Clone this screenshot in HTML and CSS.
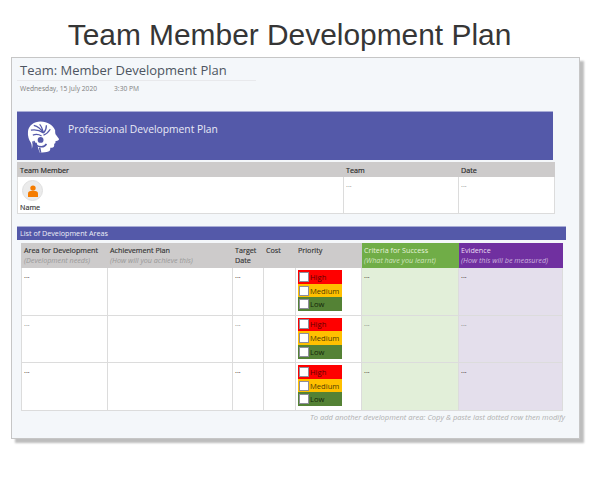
FILE: index.html
```html
<!DOCTYPE html>
<html lang="en">
<head>
<meta charset="utf-8">
<title>Team Member Development Plan</title>
<link rel="stylesheet" href="styles.css">
</head>
<body>
<h1 class="slide-title">Team Member Development Plan</h1>
<main class="panel">
  <header class="page-head">
    <div class="page-title">Team: Member Development Plan</div>
    <div class="page-date"><span>Wednesday, 15 July 2020</span><span>3:30 PM</span></div>
  </header>
  <section class="banner">
    <svg class="banner-icon" viewBox="0 0 34 34" aria-hidden="true">
      <path fill="#fff" d="M14 1C7 1 2 5 1 11c-.5 5 1 9 3 12 1 2 1 4 1 6 1-3 1-5 0-8 2 2 3 2 5 2 1 4 2 7 3 10 4 0 7 0 9-1 2-1 2-2 2-4 2 0 4 0 4-2l0-2c1 0 2-1 1-2l1-1c2 0 3-1 3-2l-3-4c-1-1-1-3-1-5C27 5 21 1 14 1z"/>
      <path fill="none" stroke="#5459a9" stroke-width="1.3" d="M4 10c5-1 9 0 13 3M7 5c4 1 7 3 10 8M13 4c2 2 3 5 4 9M20 5c0 3-1 6-3 8M24 9c-2 3-4 5-7 6M6 15c3-1 6-1 9 1"/>
      <circle cx="14" cy="20" r="3" fill="#5459a9"/>
      <path fill="none" stroke="#5459a9" stroke-width="1.6" d="M7 21c1 4 4 6 8 6 2 0 4-1 5-3M13 28l1 5"/>
    </svg>
    <span class="banner-text">Professional Development Plan</span>
  </section>
  <table class="team-table">
    <colgroup><col class="tc1"><col class="tc2"><col class="tc3"></colgroup>
    <thead><tr><th>Team Member</th><th>Team</th><th>Date</th></tr></thead>
    <tbody>
      <tr>
        <td>
          <div class="avatar">
            <svg viewBox="0 0 12 12" width="12" height="12" aria-hidden="true">
              <circle cx="6" cy="3.1" r="2.7" fill="#f57c00"/>
              <path fill="#f57c00" d="M1 12V8.600C1 7 2.200 6 3.600 6h4.800C9.800 6 11 7 11 8.600V12z"/>
            </svg>
          </div>
          <div class="avatar-name">Name</div>
        </td>
        <td class="muted">...</td>
        <td class="muted">...</td>
      </tr>
    </tbody>
  </table>
  <div class="list-bar">List of Development Areas</div>
  <table class="dev-table">
    <colgroup>
      <col class="c1"><col class="c2"><col class="c3"><col class="c4"><col class="c5"><col class="c6"><col class="c7">
    </colgroup>
    <thead>
      <tr>
        <th>Area for Development<em>(Development needs)</em></th>
        <th>Achievement Plan<em>(How will you achieve this)</em></th>
        <th>Target Date</th>
        <th>Cost</th>
        <th>Priority</th>
        <th class="head-green">Criteria for Success<em>(What have you learnt)</em></th>
        <th class="head-purple">Evidence<em>(How this will be measured)</em></th>
      </tr>
    </thead>
    <tbody>
      <tr>
        <td>...</td><td></td><td>...</td><td></td>
        <td class="prio-cell"><div class="prio high"><i></i>High</div><div class="prio medium"><i></i>Medium</div><div class="prio low"><i></i>Low</div></td>
        <td class="cell-green">...</td><td class="cell-purple">...</td>
      </tr>
      <tr class="faint">
        <td>...</td><td></td><td>...</td><td></td>
        <td class="prio-cell"><div class="prio high"><i></i>High</div><div class="prio medium"><i></i>Medium</div><div class="prio low"><i></i>Low</div></td>
        <td class="cell-green">...</td><td class="cell-purple">...</td>
      </tr>
      <tr>
        <td>...</td><td></td><td>...</td><td></td>
        <td class="prio-cell"><div class="prio high"><i></i>High</div><div class="prio medium"><i></i>Medium</div><div class="prio low"><i></i>Low</div></td>
        <td class="cell-green">...</td><td class="cell-purple">...</td>
      </tr>
    </tbody>
  </table>
  <p class="note">To add another development area: Copy &amp; paste last dotted row then modify</p>
</main>
</body>
</html>
```

FILE: styles.css
```css
* { box-sizing: border-box; }

html, body { margin: 0; padding: 0; background: #fff; }

body {
  width: 600px;
  height: 480px;
  overflow: hidden;
  font-family: "Open Sans", "Noto Sans", sans-serif;
}

.slide-title {
  margin: 0;
  height: 57px;
  padding: 17px 21px 0 0;
  font: 400 29.900px/36px "Liberation Sans", Arial, sans-serif;
  color: #363636;
  text-align: center;
}

.panel {
  width: 569px;
  height: 382px;
  margin-left: 11px;
  padding: 0 5px;
  background: #f4f7fa;
  border: 1px solid #c6c6c6;
  box-shadow: 4px 4px 2px #bdbdbd;
}

.page-head { height: 53px; }

.page-title {
  width: 239px;
  height: 23px;
  padding: 3px 0 0 3px;
  border-bottom: 1px solid #e8e9ec;
  font-size: 13px;
  line-height: 19px;
  color: #4d5561;
  white-space: nowrap;
}

.page-date {
  display: flex;
  gap: 17px;
  padding: 3px 0 0 3px;
  font-size: 6.700px;
  line-height: 9px;
  color: #808080;
}

.banner {
  display: flex;
  align-items: center;
  width: 536px;
  height: 49px;
  padding: 0 0 0 10px;
  background: #5459a9;
  border-top: 1px solid #a9add6;
}

.banner-icon { width: 33px; height: 34px; margin-top: 2px; flex: none; }

.banner-text {
  margin: -15px 0 0 8px;
  font-size: 10.300px;
  color: #e9eaf6;
}

table {
  table-layout: fixed;
  border-collapse: collapse;
  background: #fff;
}

.team-table { width: 537px; margin-top: 2px; height: 51px; }
.tc1 { width: 326px; }
.tc2 { width: 115px; }
.tc3 { width: 96px; }

.team-table th {
  height: 14px;
  padding: 0 2px;
  background: #cdcbcb;
  font-size: 7.200px;
  font-weight: 400;
  color: #262626;
  text-align: left;
  border: 1px solid #cdcbcb;
  -webkit-text-stroke: .15px #262626;
}

.team-table td {
  padding: 1px 2px;
  vertical-align: top;
  border: 1px solid #dcdcdc;
  font-size: 7.200px;
  line-height: 12px;
}

.team-table td.muted { color: #8a8a8a; }

.avatar {
  display: flex;
  align-items: center;
  justify-content: center;
  width: 21px;
  height: 21px;
  margin: 2px 0 0 2px;
  border-radius: 50%;
  background: #ebebeb;
  border: 1px solid #e0e0e0;
}

.avatar-name {
  font-size: 7.200px;
  line-height: 9px;
  margin-top: 2px;
  color: #333;
  -webkit-text-stroke: .15px #333;
}

.list-bar {
  width: 549px;
  height: 14px;
  margin-top: 12px;
  padding-left: 3px;
  background: #5459a9;
  border-top: 1px solid #a9add6;
  font-size: 7.200px;
  line-height: 13px;
  color: #edeef7;
}

.dev-table { width: 541px; margin: 3px 0 0 4px; }
.c1 { width: 86px; }
.c2 { width: 125px; }
.c3 { width: 31px; }
.c4 { width: 32px; }
.c5 { width: 66px; }
.c6 { width: 97px; }
.c7 { width: 104px; }

.dev-table th {
  height: 24px;
  padding: 1px 2px 0;
  background: #cdcbcb;
  border: 1px solid #cdcbcb;
  font-size: 7.200px;
  line-height: 10px;
  font-weight: 400;
  color: #333;
  text-align: left;
  vertical-align: top;
  -webkit-text-stroke: .15px #333;
}

.dev-table th em {
  display: block;
  white-space: nowrap;
  color: #999;
  -webkit-text-stroke: 0;
}

.dev-table th.head-green {
  background: #70ad47;
  border-color: #70ad47;
  color: #e6f3dc;
  -webkit-text-stroke: 0;
}
.dev-table th.head-green em { color: #cfe4bd; }

.dev-table th.head-purple {
  background: #7030a0;
  border-color: #7030a0;
  color: #e8dcf2;
  -webkit-text-stroke: 0;
}
.dev-table th.head-purple em { color: #cbb3de; }

.dev-table td {
  height: 47.500px;
  padding: 1px 2px;
  border: 1px solid #dcdcdc;
  vertical-align: top;
  font-size: 7.200px;
  line-height: 12px;
  color: #222;
}

.dev-table .faint td { color: #808080; }

.dev-table td.cell-green { background: #e2efd9; }
.dev-table td.cell-purple { background: #e4dfec; }

.dev-table td.prio-cell { padding: 2px 0 0 2px; }

.prio {
  display: flex;
  align-items: center;
  gap: 1px;
  width: 44px;
  height: 13.700px;
  padding-left: 1px;
  font-size: 7.600px;
  line-height: 12px;
}

.prio i {
  display: block;
  width: 10px;
  height: 10px;
  background: #fff;
  border: 1px solid #8d8d9a;
  flex: none;
}

.dev-table .prio.high { background: #ff0000; color: #5e0000; }
.dev-table .prio.medium { background: #ffc000; color: #4f3b00; }
.dev-table .prio.low { background: #548235; color: #14240a; }

.note {
  margin: 1px 0 0;
  width: 548px;
  text-align: right;
  font-size: 7.560px;
  line-height: 10px;
  font-style: italic;
  color: #b0b0b0;
  white-space: nowrap;
}
```
